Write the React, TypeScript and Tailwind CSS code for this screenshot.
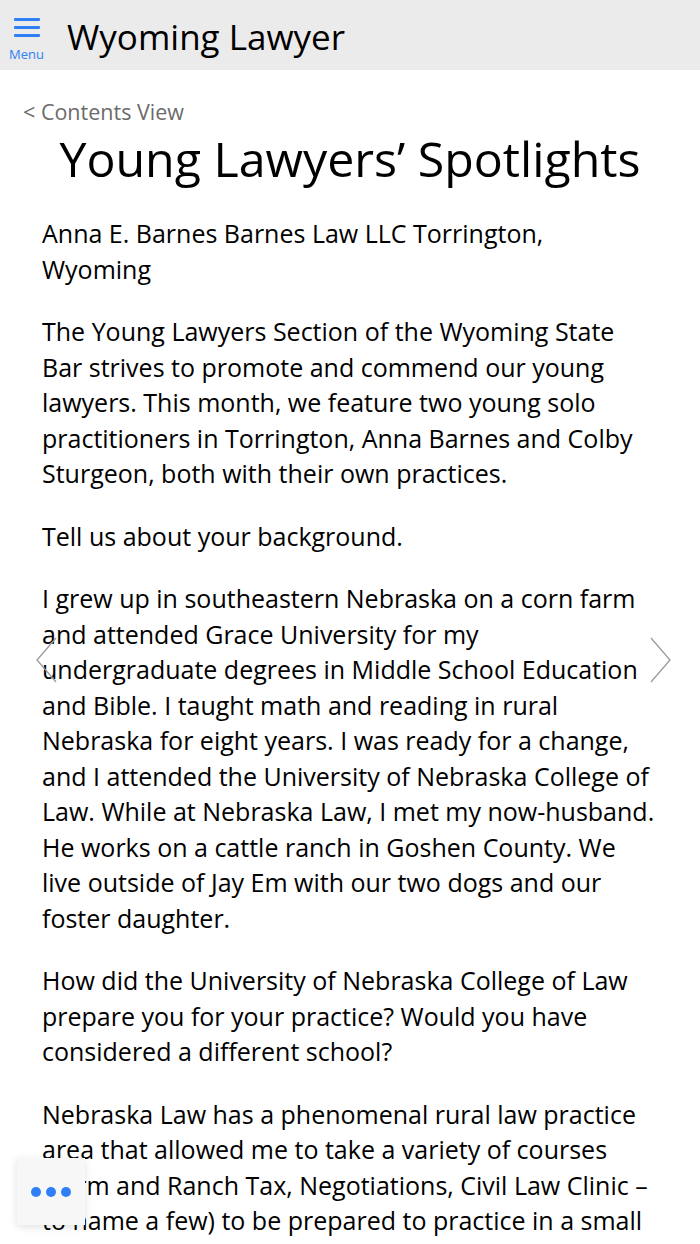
import React from "react";

const paragraphs: string[] = [
  "Anna E. Barnes Barnes Law LLC Torrington, Wyoming",
  "The Young Lawyers Section of the Wyoming State Bar strives to promote and commend our young lawyers. This month, we feature two young solo practitioners in Torrington, Anna Barnes and Colby Sturgeon, both with their own practices.",
  "Tell us about your background.",
  "I grew up in southeastern Nebraska on a corn farm and attended Grace University for my undergraduate degrees in Middle School Education and Bible. I taught math and reading in rural Nebraska for eight years. I was ready for a change, and I attended the University of Nebraska College of Law. While at Nebraska Law, I met my now-husband. He works on a cattle ranch in Goshen County. We live outside of Jay Em with our two dogs and our foster daughter.",
  "How did the University of Nebraska College of Law prepare you for your practice? Would you have considered a different school?",
  "Nebraska Law has a phenomenal rural law practice area that allowed me to take a variety of courses (Farm and Ranch Tax, Negotiations, Civil Law Clinic – to name a few) to be prepared to practice in a small town.",
];

export default function App() {
  return (
    <div
      className="relative w-[700px] h-[1244px] overflow-hidden bg-white text-black"
      style={{ fontFamily: '"Open Sans", "Noto Sans", sans-serif' }}
    >
      <header className="h-[70px] bg-[#ebebeb] flex items-center">
        <div className="w-[53px] flex flex-col items-center pt-[9px]">
          <div className="flex flex-col gap-[5px] w-[26px]">
            <div className="h-[3px] bg-[#2f80f6] rounded-[1px]" />
            <div className="h-[3px] bg-[#2f80f6] rounded-[1px]" />
            <div className="h-[3px] bg-[#2f80f6] rounded-[1px]" />
          </div>
          <div className="text-[13px] leading-[16px] text-[#2f80f6] mt-[9px]">Menu</div>
        </div>
        <div className="ml-[14px] text-[35px] leading-none pt-[3px]">Wyoming Lawyer</div>
      </header>

      <div className="pl-[23px] pt-[28px] text-[21.5px] leading-[28px] text-[#6b6b6b]">&lt; Contents View</div>

      <h1 className="text-center text-[48.3px] leading-[64px] mt-[0px] font-normal">Young Lawyers’ Spotlights</h1>

      <div className="pl-[42px] w-[656px] pt-[26px] text-[25px] leading-[35.5px]">
        {paragraphs.map((p, i) => (
          <p key={i} className="mb-[27px]">
            {p}
          </p>
        ))}
      </div>

      <svg className="absolute left-[35px] top-[637px]" width="24" height="46" viewBox="0 0 24 46" fill="none">
        <path d="M21 1 L2 23 L21 45" stroke="#9a9a9a" strokeWidth="1.3" />
      </svg>
      <svg className="absolute left-[648px] top-[637px]" width="24" height="46" viewBox="0 0 24 46" fill="none">
        <path d="M3 1 L22 23 L3 45" stroke="#9a9a9a" strokeWidth="1.3" />
      </svg>

      <div className="absolute left-[17px] top-[1158px] w-[68px] h-[67px] bg-[#f7f7f7] shadow-[0_2px_8px_rgba(0,0,0,0.12)] flex items-center justify-center gap-[5px]">
        <span className="w-[10px] h-[10px] rounded-full bg-[#2f80f6]" />
        <span className="w-[10px] h-[10px] rounded-full bg-[#2f80f6]" />
        <span className="w-[10px] h-[10px] rounded-full bg-[#2f80f6]" />
      </div>
    </div>
  );
}
